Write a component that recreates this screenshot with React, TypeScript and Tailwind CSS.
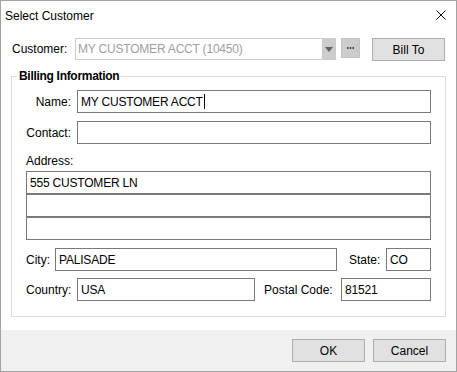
import React from "react";

function Field({ value, caret, className = "" }: { value?: string; caret?: boolean; className?: string }) {
  return (
    <div className={`flex h-[23px] items-center border border-[#7a7a7a] bg-white pl-[3px] text-black ${className}`}>
      <span className="whitespace-nowrap tracking-[-0.2px]">{value}</span>
      {caret && <span className="ml-px h-[15px] w-px bg-black" />}
    </div>
  );
}

function Button({ label }: { label: string }) {
  return (
    <button className="flex h-[23px] w-[73px] items-center justify-center border border-[#adadad] bg-[#e1e1e1] text-black">
      {label}
    </button>
  );
}

export default function App() {
  return (
    <div
      className="flex h-[372px] w-[457px] flex-col border border-[#a3a3a3] bg-white text-[12px] leading-[14px] text-black"
      style={{ fontFamily: '"Liberation Sans", Arial, sans-serif' }}
    >
      {/* title bar */}
      <div className="flex h-[29px] shrink-0 items-center justify-between pl-[4px] pr-[10px]">
        <span>Select Customer</span>
        <svg width="10" height="10" viewBox="0 0 10 10" className="mb-[2px]">
          <path d="M0.5 0.5 L9.5 9.5 M9.5 0.5 L0.5 9.5" stroke="#000" strokeWidth="1" />
        </svg>
      </div>

      <div className="flex flex-1 flex-col">
        {/* customer row */}
        <div className="mt-[8px] flex h-[23px] items-start pl-[11px]">
          <span className="mt-[4px] w-[63px]">Customer:</span>
          <div className="flex h-[22px] w-[261px] items-center border border-[#cccccc] bg-white pl-[2px]">
            <span className="flex-1 whitespace-nowrap tracking-[-0.2px] text-[#a0a0a0]">MY CUSTOMER ACCT (10450)</span>
            <div className="flex h-[20px] w-[13px] items-center justify-center bg-[#cccccc]">
              <svg width="8" height="5" viewBox="0 0 8 5">
                <path d="M0 0 L8 0 L4 5 Z" fill="#606060" />
              </svg>
            </div>
          </div>
          <div className="ml-[5px] flex h-[20px] w-[19px] items-center justify-center border border-[#c4c4c4] bg-[#cccccc]">
            <svg width="7" height="2" viewBox="0 0 7 2">
              <rect x="0" y="0" width="1.5" height="2" fill="#404040" />
              <rect x="2.75" y="0" width="1.5" height="2" fill="#404040" />
              <rect x="5.5" y="0" width="1.5" height="2" fill="#404040" />
            </svg>
          </div>
          <div className="ml-[12px]">
            <Button label="Bill To" />
          </div>
        </div>

        {/* billing group */}
        <fieldset className="mx-[10px] mt-[8px] border border-[#dcdcdc] px-[14px] pb-[15px]">
          <legend className="-ml-[9px] px-[2px] font-bold leading-[14px] tracking-[-0.3px]">Billing Information</legend>

          <div className="mt-[7px] flex items-center">
            <span className="w-[45px] text-right">Name:</span>
            <Field value="MY CUSTOMER ACCT" caret className="ml-[6px] flex-1" />
          </div>
          <div className="mt-[8px] flex items-center">
            <span className="w-[45px] text-right">Contact:</span>
            <Field className="ml-[6px] flex-1" />
          </div>

          <div className="mt-[10px]">Address:</div>
          <div className="mt-[3px] flex flex-col">
            <Field value="555 CUSTOMER LN" />
            <Field />
            <Field />
          </div>

          <div className="mt-[8px] flex items-center">
            <span className="w-[29px]">City:</span>
            <Field value="PALISADE" className="w-[282px]" />
            <span className="ml-[12px] w-[37px]">State:</span>
            <Field value="CO" className="flex-1" />
          </div>

          <div className="mt-[7px] flex items-center">
            <span className="w-[51px]">Country:</span>
            <Field value="USA" className="w-[178px]" />
            <span className="ml-[9px] w-[77px]">Postal Code:</span>
            <Field value="81521" className="flex-1" />
          </div>
        </fieldset>

        {/* footer */}
        <div className="mt-auto flex h-[41px] items-start justify-end gap-[8px] bg-[#f0f0f0] pr-[10px] pt-[9px]">
          <Button label="OK" />
          <Button label="Cancel" />
        </div>
      </div>
    </div>
  );
}
